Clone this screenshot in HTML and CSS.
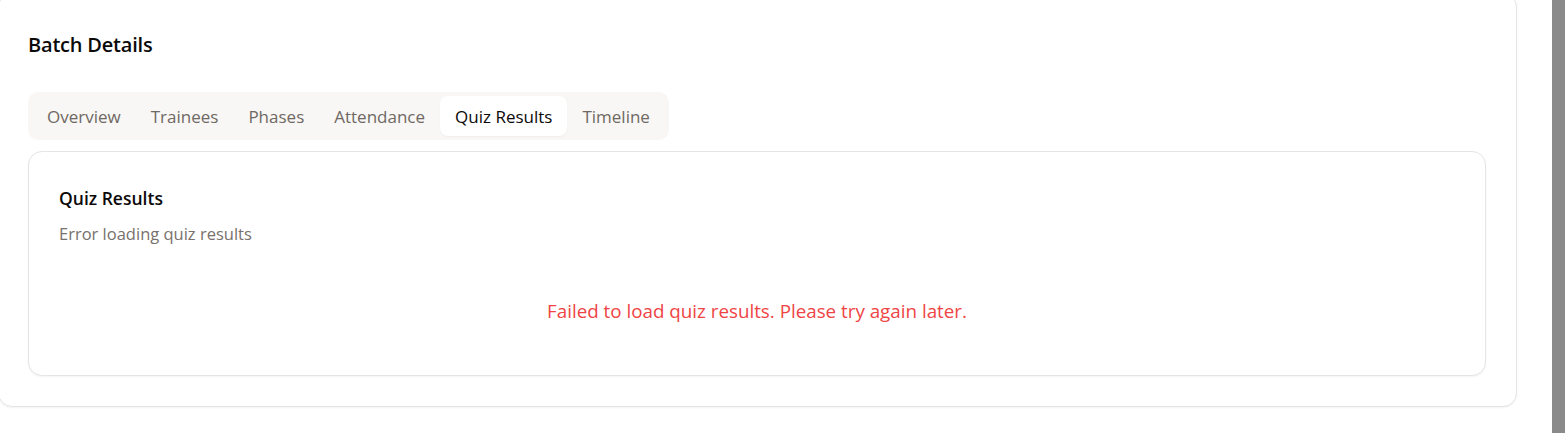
FILE: index.html
```html
<!DOCTYPE html>
<html lang="en">
<head>
<meta charset="utf-8">
<title>Batch Details</title>
<link rel="stylesheet" href="styles.css">
</head>
<body>
<div class="page">
  <section class="card">
    <h1 class="card-title">Batch Details</h1>
    <nav class="tabs">
      <span class="tab">Overview</span>
      <span class="tab">Trainees</span>
      <span class="tab">Phases</span>
      <span class="tab">Attendance</span>
      <span class="tab active">Quiz Results</span>
      <span class="tab">Timeline</span>
    </nav>
    <div class="panel">
      <div class="panel-header">
        <h2 class="panel-title">Quiz Results</h2>
        <p class="panel-desc">Error loading quiz results</p>
      </div>
      <div class="panel-body">
        <p class="error">Failed to load quiz results. Please try again later.</p>
      </div>
    </div>
  </section>
</div>
<div class="scrollbar"></div>
</body>
</html>
```

FILE: styles.css
```css
* { box-sizing: border-box; }
html, body { margin: 0; padding: 0; background: #ffffff; overflow: hidden; }
body {
  font-family: "Open Sans", "Noto Sans", "Liberation Sans", sans-serif;
  color: #0c0a09;
  height: 433px;
}
.page {
  padding-right: 48px;
}
.card {
  margin: -7px 0 0 -2px;
  background: #fff;
  border: 1px solid #e5e5e5;
  border-radius: 14px;
  box-shadow: 0 1px 2px rgba(0,0,0,0.05);
  padding: 37px 30px 30px 29px;
}
.card-title {
  margin: 0;
  font-size: 20px;
  font-weight: 600;
  line-height: 28px;
  letter-spacing: -0.2px;
}
.tabs {
  margin-top: 33px;
  display: inline-flex;
  align-items: center;
  background: #f8f7f5;
  border-radius: 10px;
  padding: 4px;
  height: 48px;
}
.tab {
  height: 40px;
  display: flex;
  align-items: center;
  padding: 0 15px;
  font-size: 17px;
  font-weight: 500;
  color: #6f6863;
  border-radius: 8px;
  letter-spacing: 0;
}
.tab.active {
  background: #fff;
  color: #0c0a09;
  box-shadow: 0 1px 2px rgba(0,0,0,0.04);
}
.panel {
  margin-top: 11px;
  border: 1px solid #e5e5e5;
  border-radius: 14px;
  background: #fff;
  box-shadow: 0 1px 2px rgba(0,0,0,0.05);
}
.panel-header {
  padding: 32px 30px 0;
}
.panel-title {
  margin: 0;
  font-size: 17.5px;
  font-weight: 600;
  line-height: 28px;
}
.panel-desc {
  margin: 10px 0 0;
  font-size: 16.5px;
  line-height: 24px;
  color: #78716c;
}
.panel-body {
  padding: 53px 30px 52px;
  text-align: center;
}
.error {
  margin: 0;
  font-size: 18.8px;
  line-height: 24px;
  color: #ef4444;
}
.scrollbar {
  position: fixed;
  top: 0;
  right: 0;
  width: 13px;
  height: 100%;
  background: #8a8a8a;
}
```
